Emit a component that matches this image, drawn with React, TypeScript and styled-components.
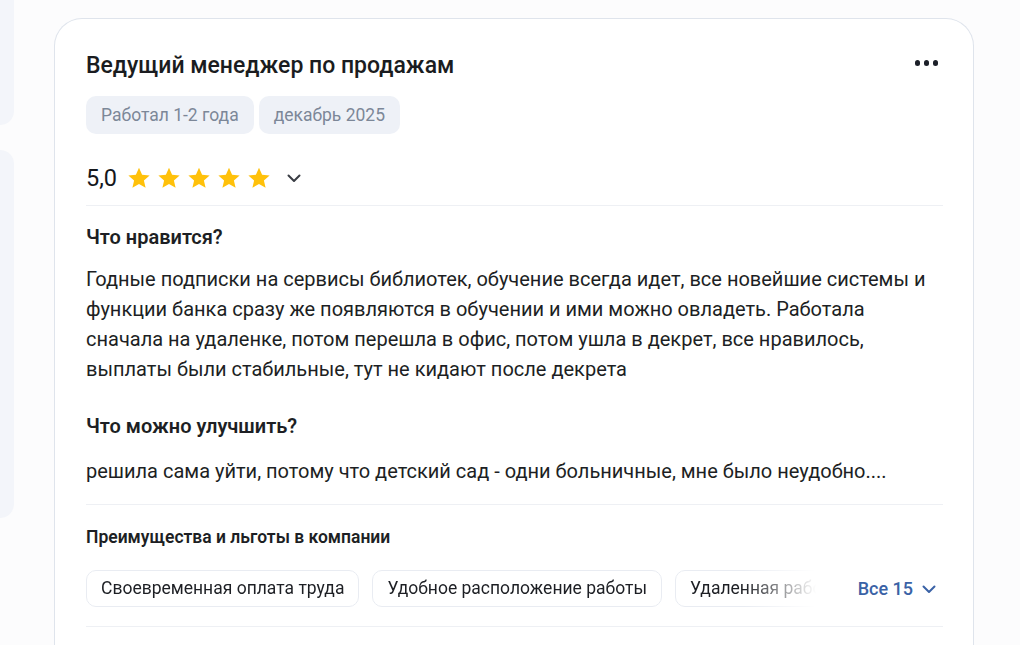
import styled, { createGlobalStyle } from "styled-components";

const GlobalStyle = createGlobalStyle`
    body {
        margin: 0;
        background: #fcfcfd;
        font-family: Roboto, "Noto Sans", sans-serif;
        color: #1d1f24;
    }
`

const Page = styled.div`
    display: flex;
    gap: 40px;
    height: 645px;
    overflow: hidden;
`

const SideColumn = styled.div`
    display: flex;
    flex-direction: column;
    gap: 25px;
    width: 14px;
    flex-shrink: 0;
`

const SidePanel = styled.div<{ $h: number; $top?: boolean }>`
    height: ${p => p.$h}px;
    background: #f3f5fa;
    border-radius: ${p => (p.$top ? "0 0 14px 0" : "0 14px 14px 0")};
`

const Card = styled.section`
    margin-top: 18px;
    width: 920px;
    box-sizing: border-box;
    border: 1px solid #dfe4ec;
    border-bottom: none;
    border-radius: 28px 28px 0 0;
    background: #fff;
    padding: 33px 30px 0 31px;
    height: 700px;
`

const Header = styled.div`
    display: flex;
    justify-content: space-between;
    align-items: flex-start;
`

const Title = styled.h2`
    margin: 0;
    font-size: 23px;
    line-height: 28px;
    font-weight: 500;
    color: #1a1c20;
`

const MoreButton = styled.button`
    border: none;
    background: none;
    padding: 0;
    margin-right: 5px;
    display: flex;
    gap: 3.5px;
    height: 22px;
    align-items: center;
    span {
        width: 5.5px;
        height: 5.5px;
        border-radius: 50%;
        background: #1c2029;
    }
`

const Tags = styled.div`
    display: flex;
    gap: 5px;
    margin-top: 16px;
`

const Tag = styled.span`
    background: #eef1f7;
    color: #7c8798;
    font-size: 17.5px;
    line-height: 38px;
    padding: 0 15px;
    border-radius: 10px;
`

const RatingRow = styled.div`
    display: flex;
    align-items: center;
    gap: 10px;
    height: 38px;
    margin-top: 25px;
    padding-bottom: 8px;
    border-bottom: 1px solid #eef0f4;
`

const Score = styled.span`
    font-size: 23.5px;
    font-weight: 400;
    color: #15171b;
`

const Stars = styled.div`
    display: flex;
    gap: 6px;
    margin-right: 5px;
`

const Section = styled.div`
    padding-top: 19px;
`

const Question = styled.h3<{ $gap: number }>`
    margin: 0 0 ${p => p.$gap}px;
    font-size: 20px;
    line-height: 24px;
    font-weight: 600;
    color: #1d1f24;
`

const Answer = styled.p<{ $gap: number }>`
    margin: 0 0 ${p => p.$gap}px;
    font-size: 20px;
    line-height: 30px;
    color: #1d1f24;
`

const Benefits = styled.div`
    border-top: 1px solid #eef0f4;
    border-bottom: 1px solid #eef0f4;
    padding: 22px 0 19px;
`

const BenefitsTitle = styled.h4`
    margin: 0 0 23px;
    font-size: 17.5px;
    line-height: 20px;
    font-weight: 600;
`

const ChipsRow = styled.div`
    display: flex;
    align-items: center;
    gap: 20px;
`

const ChipsTrack = styled.div`
    display: flex;
    gap: 13px;
    width: 730px;
    overflow: hidden;
    mask-image: linear-gradient(to right, #000 90%, transparent 100%);
    -webkit-mask-image: linear-gradient(to right, #000 90%, transparent 100%);
`

const Chip = styled.span`
    flex-shrink: 0;
    border: 1px solid #e9ecf2;
    border-radius: 10px;
    padding: 0 14px;
    font-size: 17.5px;
    line-height: 35px;
    white-space: nowrap;
    color: #1d1f24;
`

const AllLink = styled.button`
    border: none;
    background: none;
    padding: 0;
    display: flex;
    align-items: center;
    gap: 8px;
    margin-left: auto;
    margin-right: 6px;
    font-family: inherit;
    font-size: 18px;
    font-weight: 500;
    color: #3a62a6;
`

const Star = () => (
    <svg width="24" height="24" viewBox="0 0 24 24">
        <path d="M12 1.8l3.1 7 7.5.6-5.7 5 1.7 7.4L12 17.9l-6.6 3.9 1.7-7.4-5.7-5 7.5-.6z" fill="#ffc10a" />
    </svg>
)

const Chevron = ({ color }: { color: string }) => (
    <svg width="16" height="16" viewBox="0 0 16 16" fill="none">
        <path d="M2.5 5.5l5.5 5.5 5.5-5.5" stroke={color} strokeWidth="2" strokeLinecap="round" strokeLinejoin="round" />
    </svg>
)

const benefits = [
    "Своевременная оплата труда",
    "Удобное расположение работы",
    "Удаленная работа",
]

export default function App() {
    return (
        <>
            <GlobalStyle />
            <Page>
                <SideColumn>
                    <SidePanel $h={125} $top />
                    <SidePanel $h={368} />
                </SideColumn>
                <Card>
                    <Header>
                        <Title>Ведущий менеджер по продажам</Title>
                        <MoreButton aria-label="Ещё">
                            <span /><span /><span />
                        </MoreButton>
                    </Header>
                    <Tags>
                        <Tag>Работал 1-2 года</Tag>
                        <Tag>декабрь 2025</Tag>
                    </Tags>
                    <RatingRow>
                        <Score>5,0</Score>
                        <Stars>
                            {[0, 1, 2, 3, 4].map(i => <Star key={i} />)}
                        </Stars>
                        <Chevron color="#3a3d44" />
                    </RatingRow>
                    <Section>
                        <Question $gap={15}>Что нравится?</Question>
                        <Answer $gap={30}>
                            Годные подписки на сервисы библиотек, обучение всегда идет, все новейшие системы и
                            функции банка сразу же появляются в обучении и ими можно овладеть. Работала
                            сначала на удаленке, потом перешла в офис, потом ушла в декрет, все нравилось,
                            выплаты были стабильные, тут не кидают после декрета
                        </Answer>
                        <Question $gap={18}>Что можно улучшить?</Question>
                        <Answer $gap={18}>решила сама уйти, потому что детский сад - одни больничные, мне было неудобно....</Answer>
                    </Section>
                    <Benefits>
                        <BenefitsTitle>Преимущества и льготы в компании</BenefitsTitle>
                        <ChipsRow>
                            <ChipsTrack>
                                {benefits.map(b => <Chip key={b}>{b}</Chip>)}
                            </ChipsTrack>
                            <AllLink>
                                Все 15
                                <Chevron color="#3a62a6" />
                            </AllLink>
                        </ChipsRow>
                    </Benefits>
                </Card>
            </Page>
        </>
    )
}
